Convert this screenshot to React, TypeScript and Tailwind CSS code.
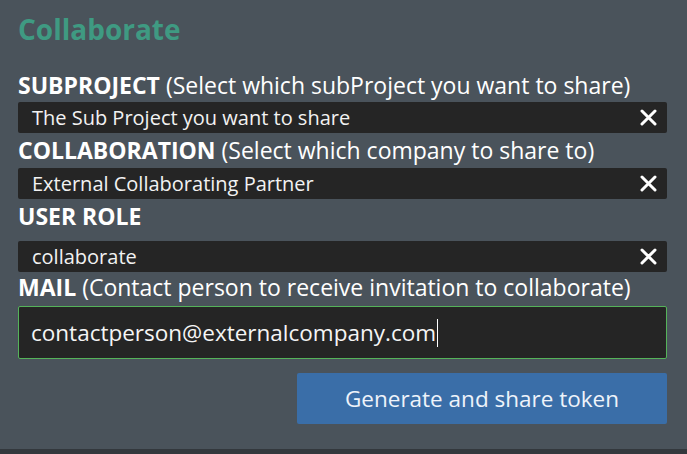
const FIELDS = [
  {
    label: "SUBPROJECT",
    hint: "(Select which subProject you want to share)",
    value: "The Sub Project you want to share",
    labelClass: "h-[34px] leading-[34px]",
  },
  {
    label: "COLLABORATION",
    hint: "(Select which company to share to)",
    value: "External Collaborating Partner",
    labelClass: "h-[35px] leading-[35px]",
  },
  {
    label: "USER ROLE",
    hint: "",
    value: "collaborate",
    labelClass: "h-[42px] leading-[35px]",
  },
];

function ClearIcon() {
  return (
    <svg width="17" height="17" viewBox="0 0 17 17" className="shrink-0">
      <path d="M2 2 L15 15 M15 2 L2 15" stroke="#ffffff" strokeWidth="3" strokeLinecap="round" />
    </svg>
  );
}

function Select({ value }: { value: string }) {
  return (
    <div className="flex h-[31px] items-center justify-between rounded-[2px] bg-[#252525] pl-[14px] pr-[10px]">
      <span className="text-[20px] leading-[31px] text-[#f2f2f2]">{value}</span>
      <ClearIcon />
    </div>
  );
}

export default function App() {
  return (
    <div
      className="flex h-[454px] w-[687px] flex-col bg-[#4a535b] text-white"
      style={{ fontFamily: '"Open Sans", "Noto Sans", sans-serif' }}
    >
      <div className="flex flex-1 flex-col pl-[18px] pr-[20px]">
        <h1 className="h-[68px] pt-[9px] text-[28px] font-bold leading-[40px] text-[#3f9a82]">
          Collaborate
        </h1>
        {FIELDS.map((f) => (
          <div key={f.label} className="flex flex-col">
            <p className={`text-[23px] whitespace-nowrap ${f.labelClass}`}>
              <strong className="font-bold">{f.label}</strong> {f.hint}
            </p>
            <Select value={f.value} />
          </div>
        ))}
        <p className="h-[34px] whitespace-nowrap text-[23px] leading-[30px]">
          <strong className="font-bold">MAIL</strong> (Contact person to receive invitation to collaborate)
        </p>
        <div className="flex h-[53px] items-center rounded-[2px] border border-[#55b35a] bg-[#252525] px-[12px]">
          <span className="text-[22.5px] text-[#f5f5f5]">contactperson@externalcompany.com</span>
          <span className="ml-[1px] h-[28px] w-[1px] bg-white" />
        </div>
        <div className="mt-[14px] flex justify-end">
          <button className="h-[51px] w-[370px] rounded-[2px] bg-[#3a6ea8] text-[22.5px] text-[#eef3fa]">
            Generate and share token
          </button>
        </div>
      </div>
      <div className="h-[5px] bg-[#33383d]" />
    </div>
  );
}
